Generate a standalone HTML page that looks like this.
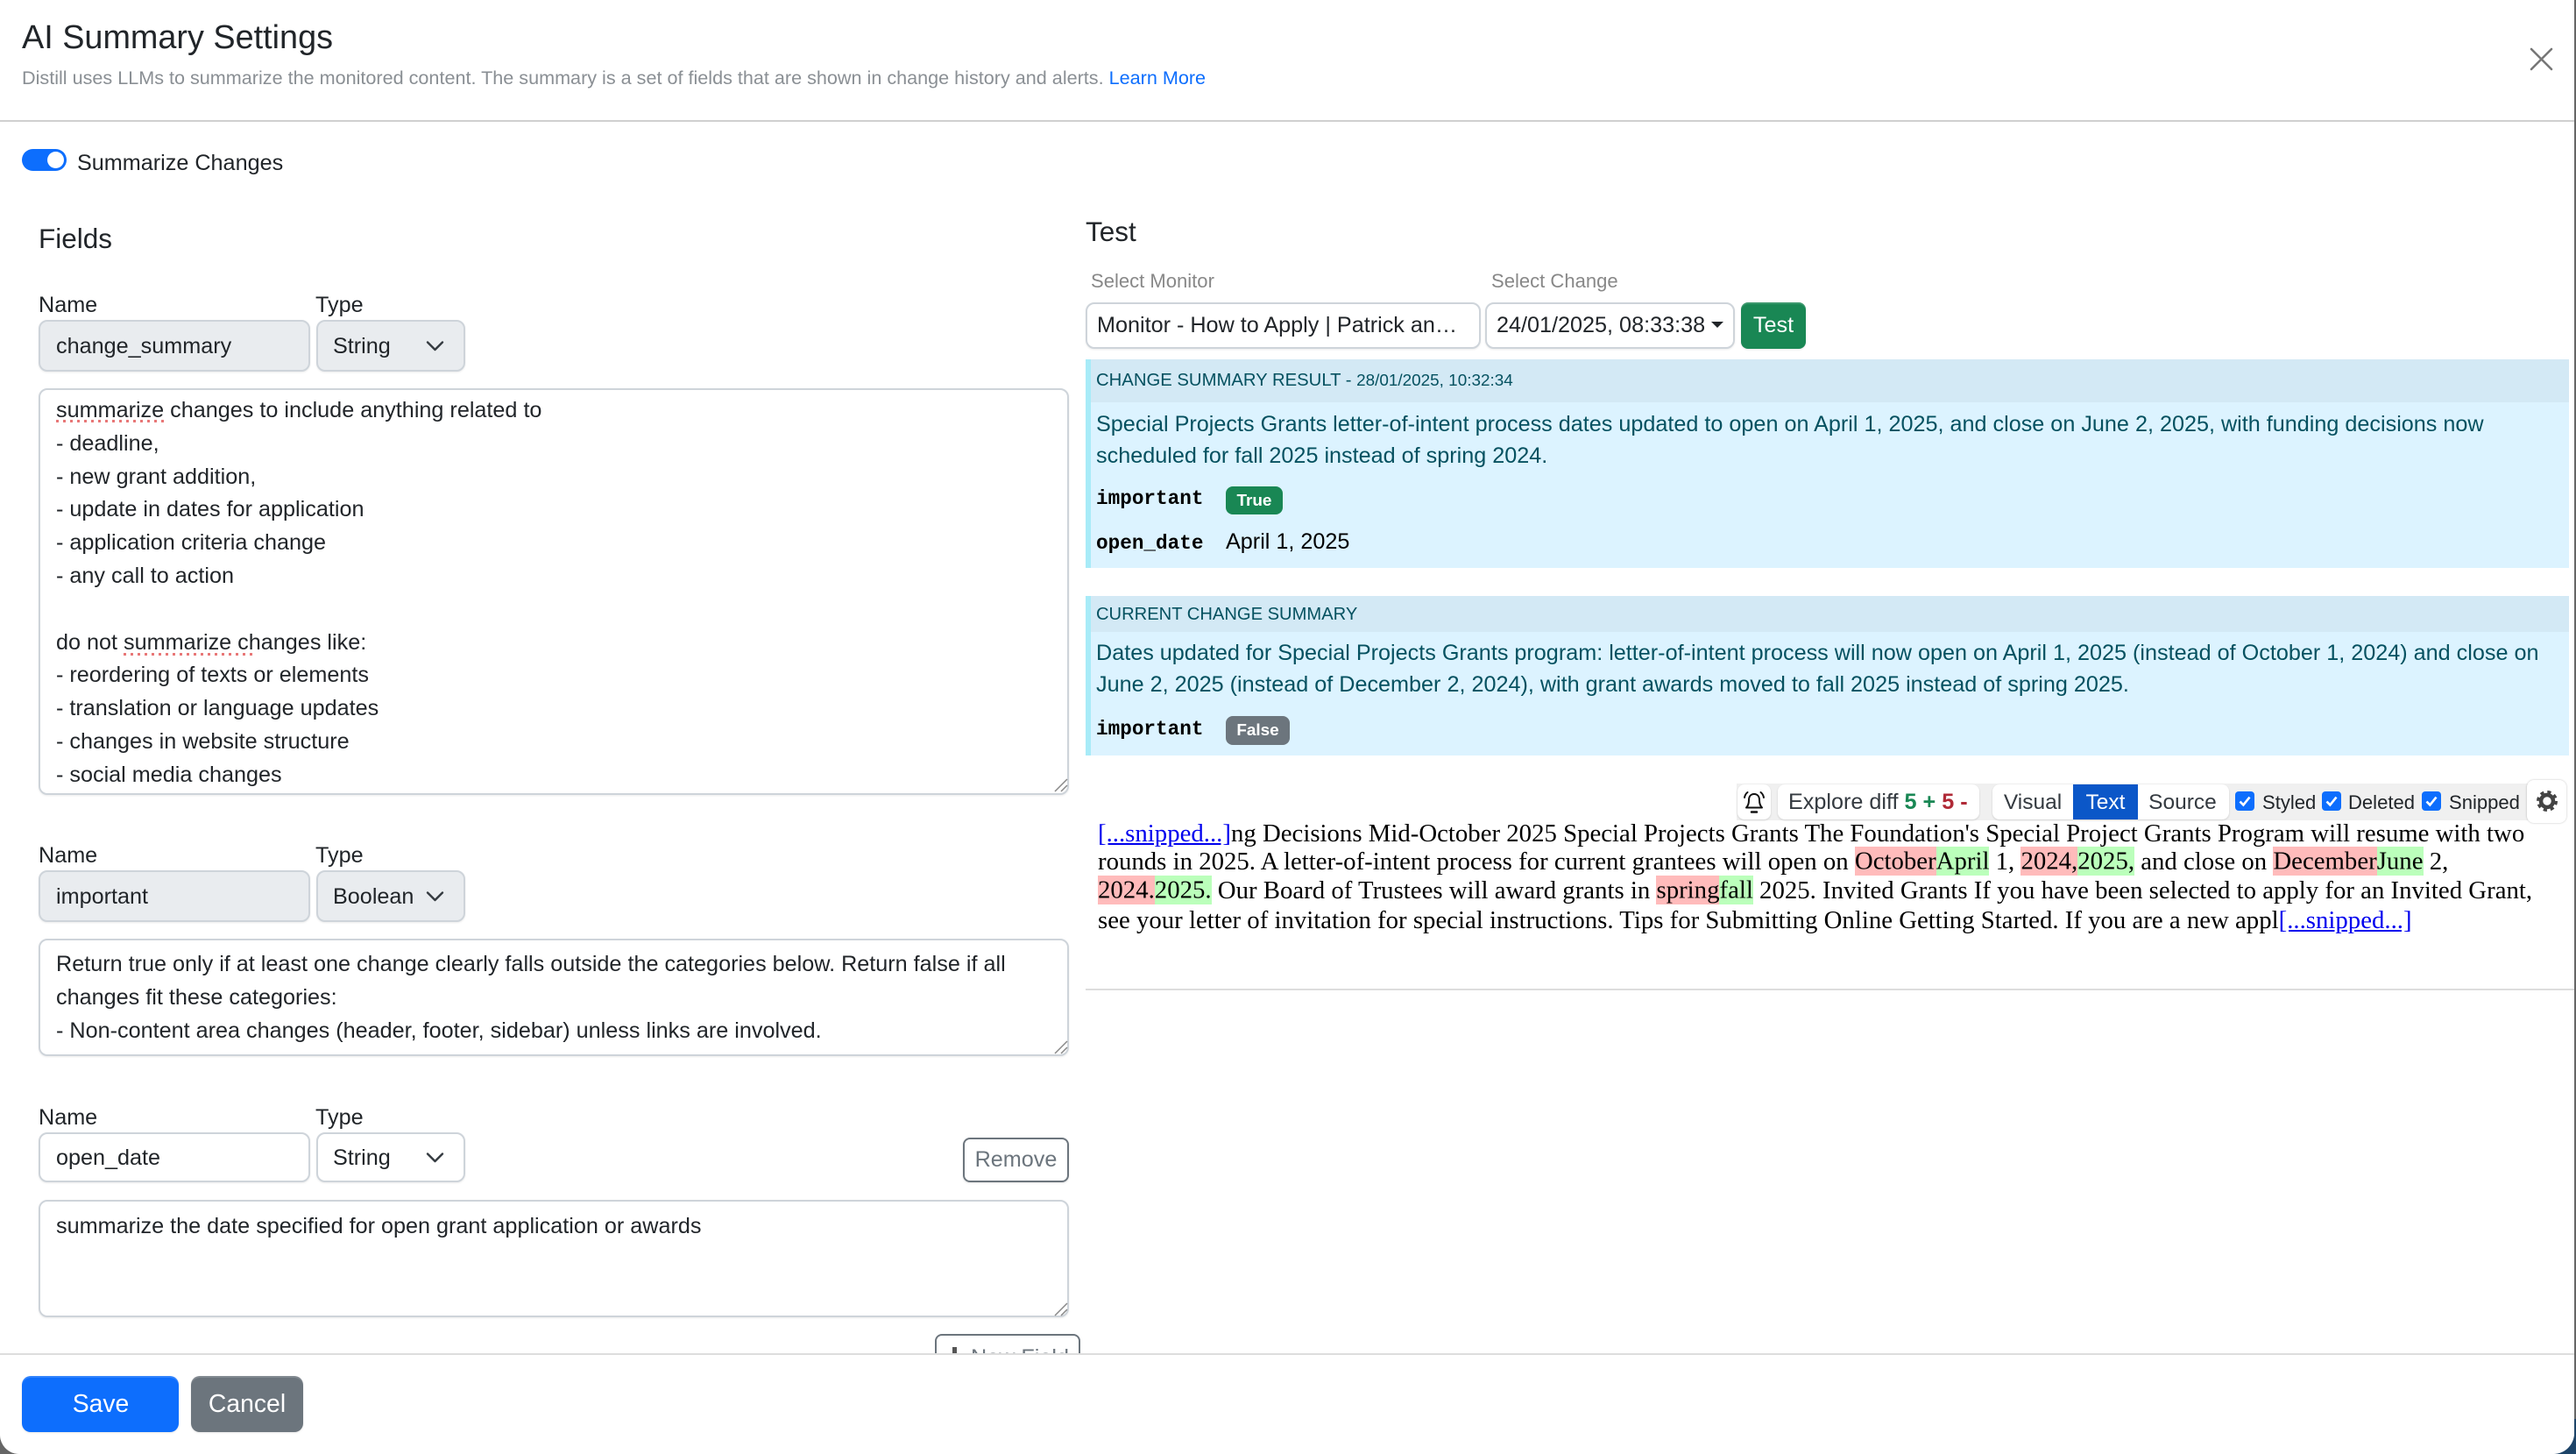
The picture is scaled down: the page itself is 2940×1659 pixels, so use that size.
<!DOCTYPE html>
<html lang="en"><head><meta charset="utf-8"><title>AI Summary Settings</title>
<style>
*{box-sizing:border-box}
html,body{margin:0;padding:0;width:2940px;height:1659px;overflow:hidden;background:#666}
body{font-family:"Liberation Sans",Arial,sans-serif;color:#212529;position:relative}
#corner{position:absolute;right:0;bottom:0;width:60px;height:40px;background:#1d4468}
#panel{position:absolute;left:0;top:0;width:2938px;height:1659px;background:#fff;border-radius:0 0 24px 22px;overflow:hidden}
.t{position:absolute;white-space:nowrap;line-height:0;height:0;font-size:calc(var(--f,25.2)*1px);top:calc((var(--b) - var(--f,25.2)*.3465)*1px)}
.c{transform:translateX(-50%)}
.s{font-family:"Liberation Serif","Times New Roman",serif;--f:28.8;top:calc((var(--b) - 28.8*.3375)*1px);color:#000}
.m{font-family:"Liberation Mono",monospace;font-weight:700;--f:22.68;top:calc((var(--b) - 22.68*.2665)*1px);color:#000}
.box{position:absolute}
.in{background:#fff;border:2px solid #ced4da;border-radius:10px;box-shadow:0 1px 2px rgba(0,0,0,.08)}
.dis{background:#e9ecef}
.hr{position:absolute;left:0;right:0;height:2px;background:#d8d8d8}
.al{position:absolute;left:1239px;width:1693px;background:#dcf3ff;border-left:6px solid #a8ebf8}
.alh{position:absolute;left:0;right:0;top:0;background:#d3e9f5}
.te{color:#055160}
.bd{position:absolute;border-radius:8px}
.bt{font-weight:700;color:#fff;--f:18.9}
.d{background:#fbb;padding:.5px 0}.n{background:#bfb;padding:.5px 0}
a{color:#00e}
.lm{color:#0d6efd;text-decoration:none}
.cb{position:absolute;width:22px;height:22px;background:#0d6efd;border-radius:4px;top:903px}
.sq{position:absolute;height:3px;background:repeating-linear-gradient(90deg,#e87777 0 3px,transparent 3px 8px)}
.tb{position:absolute;top:895px;height:40px;background:#fff;border-radius:8px;box-shadow:0 1px 2px rgba(0,0,0,.14)}
svg{position:absolute;overflow:visible}
</style></head><body>
<div id="corner"></div>
<div id="panel">

<div class="t" style="--f:37.8;--b:56.500;left:25px">AI Summary Settings</div>
<div class="t" style="--f:21.6;--b:96.500;left:25px;color:#8a8f94">Distill uses LLMs to summarize the monitored content. The summary is a set of fields that are shown in change history and alerts. <span class="lm">Learn More</span></div>
<svg style="left:2888px;top:55px" width="25" height="25" viewBox="0 0 25 25"><path d="M1 1L24 24M24 1L1 24" stroke="#777" stroke-width="2.6" stroke-linecap="round"/></svg>
<div class="hr" style="top:137px;background:#d0d0d0"></div>

<div class="box" style="left:25px;top:170px;width:51px;height:25px;border-radius:13px;background:#0d6efd"></div>
<div class="box" style="left:54px;top:173px;width:19px;height:19px;border-radius:50%;background:#fff"></div>
<div class="t" style="--b:195;left:88px">Summarize Changes</div>

<div class="t" style="--f:31.5;--b:283;left:44px">Fields</div>

<div class="t" style="--b:357;left:44px">Name</div>
<div class="t" style="--b:357;left:360px">Type</div>
<div class="box in dis" style="left:44px;top:365px;width:310px;height:59px"></div>
<div class="box in dis" style="left:361px;top:365px;width:170px;height:59px"></div>
<div class="t" style="--b:404;left:64px">change_summary</div>
<div class="t" style="--b:404;left:380px">String</div>
<svg style="left:486px;top:389px" width="21" height="12" viewBox="0 0 21 12"><path d="M2 1.5L10.5 10L19 1.5" fill="none" stroke="#343a40" stroke-width="2.4" stroke-linecap="round" stroke-linejoin="round"/></svg>

<div class="box in" style="left:44px;top:443px;width:1176px;height:464px"></div>
<div class="t" style="--b:477;left:64px">summarize changes to include anything related to</div>
<div class="sq" style="left:64px;top:479px;width:124px"></div>
<div class="t" style="--b:515;left:64px">- deadline,</div>
<div class="t" style="--b:552.500;left:64px">- new grant addition,</div>
<div class="t" style="--b:590;left:64px">- update in dates for application</div>
<div class="t" style="--b:628;left:64px">- application criteria change</div>
<div class="t" style="--b:665.500;left:64px">- any call to action</div>
<div class="t" style="--b:741.500;left:64px">do not summarize changes like:</div>
<div class="sq" style="left:141px;top:745px;width:148px"></div>
<div class="t" style="--b:779;left:64px">- reordering of texts or elements</div>
<div class="t" style="--b:816.500;left:64px">- translation or language updates</div>
<div class="t" style="--b:854.500;left:64px">- changes in website structure</div>
<div class="t" style="--b:892.500;left:64px">- social media changes</div>
<svg style="left:1204px;top:888px" width="15" height="16" viewBox="0 0 15 16"><path d="M0 15L14 1M7 15L14 8" stroke="#888" stroke-width="1.5"/></svg>

<div class="t" style="--b:985;left:44px">Name</div>
<div class="t" style="--b:985;left:360px">Type</div>
<div class="box in dis" style="left:44px;top:993px;width:310px;height:59px"></div>
<div class="box in dis" style="left:361px;top:993px;width:170px;height:59px"></div>
<div class="t" style="--b:1032;left:64px">important</div>
<div class="t" style="--b:1032;left:380px">Boolean</div>
<svg style="left:486px;top:1017px" width="21" height="12" viewBox="0 0 21 12"><path d="M2 1.5L10.5 10L19 1.5" fill="none" stroke="#343a40" stroke-width="2.4" stroke-linecap="round" stroke-linejoin="round"/></svg>

<div class="box in" style="left:44px;top:1071px;width:1176px;height:134px;overflow:hidden">
<div class="t" style="--b:36;left:18px">Return true only if at least one change clearly falls outside the categories below. Return false if all</div>
<div class="t" style="--b:74;left:18px">changes fit these categories:</div>
<div class="t" style="--b:112;left:18px">- Non-content area changes (header, footer, sidebar) unless links are involved.</div>
<div class="t" style="--b:149;left:18px">- Updates to punctuation, typos or minor accessibility fixes</div>
</div>
<svg style="left:1204px;top:1187px" width="15" height="16" viewBox="0 0 15 16"><path d="M0 15L14 1M7 15L14 8" stroke="#888" stroke-width="1.5"/></svg>

<div class="t" style="--b:1284;left:44px">Name</div>
<div class="t" style="--b:1284;left:360px">Type</div>
<div class="box in" style="left:44px;top:1292px;width:310px;height:57px"></div>
<div class="box in" style="left:361px;top:1292px;width:170px;height:57px"></div>
<div class="t" style="--b:1330;left:64px">open_date</div>
<div class="t" style="--b:1330;left:380px">String</div>
<svg style="left:486px;top:1315px" width="21" height="12" viewBox="0 0 21 12"><path d="M2 1.5L10.5 10L19 1.5" fill="none" stroke="#343a40" stroke-width="2.4" stroke-linecap="round" stroke-linejoin="round"/></svg>
<div class="box" style="left:1099px;top:1298px;width:121px;height:51px;border:2px solid #6c757d;border-radius:8px;box-shadow:0 1px 2px rgba(0,0,0,.12)"></div>
<div class="t c" style="--b:1332;left:1159.500px;color:#6c757d">Remove</div>

<div class="box in" style="left:44px;top:1369px;width:1176px;height:134px"></div>
<div class="t" style="--b:1408;left:64px">summarize the date specified for open grant application or awards</div>
<svg style="left:1204px;top:1486px" width="15" height="16" viewBox="0 0 15 16"><path d="M0 15L14 1M7 15L14 8" stroke="#888" stroke-width="1.5"/></svg>

<div class="box" style="left:1067px;top:1522px;width:166px;height:51px;border:2px solid #6c757d;border-radius:8px"></div>
<div class="box" style="left:1087px;top:1537px;width:5px;height:10px;background:#555"></div>
<div class="t" style="--b:1558;left:1108px;color:#6c757d">New Field</div>

<!-- Right column -->
<div class="t" style="--f:31.5;--b:275;left:1239px">Test</div>
<div class="t" style="--f:22.05;--b:329;left:1245px;color:#888">Select Monitor</div>
<div class="t" style="--f:22.05;--b:329;left:1702px;color:#888">Select Change</div>
<div class="box in" style="left:1239px;top:345px;width:451px;height:53px"></div>
<div class="box in" style="left:1695px;top:345px;width:285px;height:53px"></div>
<div class="t" style="--b:380;left:1252px">Monitor - How to Apply | Patrick an&hellip;</div>
<div class="t" style="--b:380;left:1708px">24/01/2025, 08:33:38</div>
<svg style="left:1953px;top:367px" width="14" height="7" viewBox="0 0 14 7"><path d="M0 0H14L7 7Z" fill="#212529"/></svg>
<div class="box" style="left:1987px;top:345px;width:74px;height:53px;background:#198754;border-radius:8px;box-shadow:inset 0 2px 0 rgba(255,255,255,.15),0 1px 2px rgba(0,0,0,.1)"></div>
<div class="t c" style="--b:380;left:2024px;color:#fff">Test</div>

<div class="al" style="top:410px;height:238px"><div class="alh" style="height:49px"></div></div>
<div class="t te" style="--f:20.3;--b:441;left:1251px">CHANGE SUMMARY RESULT - <span style="font-size:18.9px">28/01/2025, 10:32:34</span></div>
<div class="t te" style="--b:493;left:1251px">Special Projects Grants letter-of-intent process dates updated to open on April 1, 2025, and close on June 2, 2025, with funding decisions now</div>
<div class="t te" style="--b:529;left:1251px">scheduled for fall 2025 instead of spring 2024.</div>
<div class="t m" style="--b:575.500;left:1251px">important</div>
<div class="bd" style="left:1399px;top:555px;width:65px;height:32px;background:#198754"></div>
<div class="t c bt" style="--b:579;left:1431.5px">True</div>
<div class="t m" style="--b:626;left:1251px">open_date</div>
<div class="t" style="--b:627;left:1399px;color:#000">April 1, 2025</div>

<div class="al" style="top:680px;height:182px"><div class="alh" style="height:41px"></div></div>
<div class="t te" style="--f:20.16;--b:708;left:1251px">CURRENT CHANGE SUMMARY</div>
<div class="t te" style="--b:754;left:1251px">Dates updated for Special Projects Grants program: letter-of-intent process will now open on April 1, 2025 (instead of October 1, 2024) and close on</div>
<div class="t te" style="--b:790;left:1251px">June 2, 2025 (instead of December 2, 2024), with grant awards moved to fall 2025 instead of spring 2025.</div>
<div class="t m" style="--b:838;left:1251px">important</div>
<div class="bd" style="left:1399px;top:817px;width:73px;height:33px;background:#6c757d"></div>
<div class="t c bt" style="--b:841;left:1435.5px">False</div>

<!-- Toolbar -->
<div class="box" style="left:1982px;top:894px;width:908px;height:42px;background:#f0f0f0"></div>
<div class="tb" style="left:1983px;width:38px"></div>
<svg style="left:1983px;top:895px" width="38" height="40" viewBox="0 0 38 40"><path d="M19 11c-4 0-6 3-6 7 0 4-1 6.500-3 8.500h18c-2-2-3-4.500-3-8.500 0-4-2-7-6-7z" fill="none" stroke="#111" stroke-width="2" stroke-linejoin="round"/><path d="M16 31.500h6" stroke="#111" stroke-width="2.500" stroke-linecap="round"/><path d="M8 15c.5-2.500 1.500-4.500 3.500-6M30 15c-.5-2.500-1.500-4.500-3.500-6" fill="none" stroke="#111" stroke-width="2" stroke-linecap="round"/></svg>
<div class="tb" style="left:2029px;width:230px"></div>
<div class="t" style="--b:924;left:2041px;color:#343a40">Explore diff <b style="color:#198754">5 +</b> <b style="color:#b02a37">5 -</b></div>
<div class="tb" style="left:2274px;width:270px"></div>
<div class="box" style="left:2366px;top:895px;width:74px;height:40px;background:#0b57c8"></div>
<div class="t c" style="--f:24.5;--b:924;left:2320px;color:#343a40">Visual</div>
<div class="t c" style="--f:24.5;--b:924;left:2403px;color:#fff">Text</div>
<div class="t c" style="--f:24.5;--b:924;left:2491px;color:#343a40">Source</div>
<div class="cb" style="left:2551px"><svg width="22" height="22" viewBox="0 0 20 20"><path d="M5 10.500l3.500 3.500L15 6" fill="none" stroke="#fff" stroke-width="2.400"/></svg></div>
<div class="t" style="--f:22.05;--b:924;left:2582px;color:#212529">Styled</div>
<div class="cb" style="left:2650px"><svg width="22" height="22" viewBox="0 0 20 20"><path d="M5 10.500l3.500 3.500L15 6" fill="none" stroke="#fff" stroke-width="2.400"/></svg></div>
<div class="t" style="--f:22.05;--b:924;left:2680px;color:#212529">Deleted</div>
<div class="cb" style="left:2764px"><svg width="22" height="22" viewBox="0 0 20 20"><path d="M5 10.500l3.500 3.500L15 6" fill="none" stroke="#fff" stroke-width="2.400"/></svg></div>
<div class="t" style="--f:22.05;--b:924;left:2795px;color:#212529">Snipped</div>
<div class="box" style="left:2884px;top:890px;width:45px;height:49px;background:#fff;border-radius:8px;box-shadow:0 0 2px rgba(0,0,0,.25)"></div>
<svg style="left:2895px;top:902px" width="24" height="24" viewBox="0 0 24 24"><circle cx="12" cy="12" r="7" fill="none" stroke="#444" stroke-width="4.500"/><circle cx="12" cy="12" r="10" fill="none" stroke="#444" stroke-width="4" stroke-dasharray="4 3.854"/></svg>

<div class="t s" style="--b:960.500;left:1253px"><a href="#">[...snipped...]</a>ng Decisions Mid-October 2025 Special Projects Grants The Foundation's Special Project Grants Program will resume with two</div>
<div class="t s" style="--b:992.500;left:1253px">rounds in 2025. A letter-of-intent process for current grantees will open on <span class="d">October</span><span class="n">April</span> 1, <span class="d">2024,</span><span class="n">2025,</span> and close on <span class="d">December</span><span class="n">June</span> 2,</div>
<div class="t s" style="--b:1025.500;left:1253px"><span class="d">2024.</span><span class="n">2025.</span> Our Board of Trustees will award grants in <span class="d">spring</span><span class="n">fall</span> 2025. Invited Grants If you have been selected to apply for an Invited Grant,</div>
<div class="t s" style="--b:1059.500;left:1253px">see your letter of invitation for special instructions. Tips for Submitting Online Getting Started. If you are a new appl<a href="#">[...snipped...]</a></div>
<div class="box" style="left:1239px;top:1128px;width:1699px;height:2px;background:#ddd"></div>

<!-- Footer -->
<div class="box" style="left:0;top:1544px;width:2938px;height:115px;background:#fff;border-top:2px solid #ddd"></div>
<div class="box" style="left:25px;top:1570px;width:179px;height:64px;background:#0d6efd;border-radius:10px;box-shadow:inset 0 2px 0 rgba(255,255,255,.15),0 1px 2px rgba(0,0,0,.1)"></div>
<div class="t c" style="--f:28.35;--b:1612;left:115px;color:#fff">Save</div>
<div class="box" style="left:218px;top:1570px;width:128px;height:64px;background:#6c757d;border-radius:10px;box-shadow:inset 0 2px 0 rgba(255,255,255,.15),0 1px 2px rgba(0,0,0,.1)"></div>
<div class="t c" style="--f:28.35;--b:1612;left:282px;color:#fff">Cancel</div>
</div>
</body></html>
